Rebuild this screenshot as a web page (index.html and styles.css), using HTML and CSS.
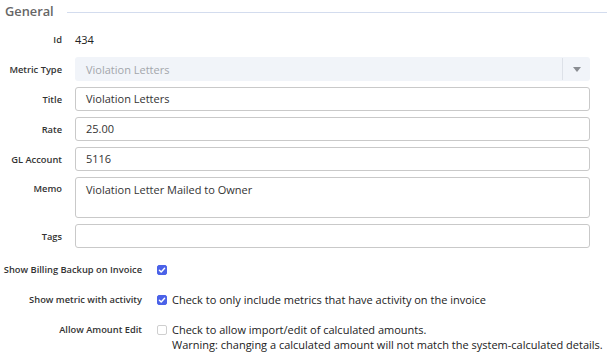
FILE: index.html
```html
<!DOCTYPE html>
<html>
<head>
<meta charset="utf-8">
<link rel="stylesheet" href="styles.css">
</head>
<body>
<div class="page">
  <div class="section-head">
    <span class="section-title">General</span>
    <span class="section-line"></span>
  </div>
  <div class="fields">
    <div class="row">
      <label class="lbl">Id</label>
      <div class="val">434</div>
    </div>
    <div class="row">
      <label class="lbl">Metric Type</label>
      <div class="select">
        <span class="select-text">Violation Letters</span>
        <span class="select-btn"><span class="caret"></span></span>
      </div>
    </div>
    <div class="row">
      <label class="lbl">Title</label>
      <div class="input">Violation Letters</div>
    </div>
    <div class="row">
      <label class="lbl">Rate</label>
      <div class="input">25.00</div>
    </div>
    <div class="row">
      <label class="lbl">GL Account</label>
      <div class="input">5116</div>
    </div>
    <div class="row row-top">
      <label class="lbl lbl-top">Memo</label>
      <div class="input textarea">Violation Letter Mailed to Owner</div>
    </div>
    <div class="row">
      <label class="lbl">Tags</label>
      <div class="input"></div>
    </div>
  </div>
  <div class="checks">
    <div class="crow">
      <label class="clbl">Show Billing Backup on Invoice</label>
      <span class="cb checked"><svg viewBox="0 0 10 10" width="10" height="10"><path d="M2.4 5.2 L4.2 7 L7.6 3.2" fill="none" stroke="#fff" stroke-width="1.4" stroke-linecap="round" stroke-linejoin="round"/></svg></span>
      <div class="ctext"></div>
    </div>
    <div class="crow">
      <label class="clbl">Show metric with activity</label>
      <span class="cb checked"><svg viewBox="0 0 10 10" width="10" height="10"><path d="M2.4 5.2 L4.2 7 L7.6 3.2" fill="none" stroke="#fff" stroke-width="1.4" stroke-linecap="round" stroke-linejoin="round"/></svg></span>
      <div class="ctext">Check to only include metrics that have activity on the invoice</div>
    </div>
    <div class="crow">
      <label class="clbl">Allow Amount Edit</label>
      <span class="cb"></span>
      <div class="ctext">Check to allow import/edit of calculated amounts.<br>Warning: changing a calculated amount will not match the system-calculated details.</div>
    </div>
  </div>
</div>
</body>
</html>
```
FILE: styles.css
```css
* { box-sizing: border-box; }
html, body { margin: 0; padding: 0; background: #fff; }
body {
  font-family: "Open Sans", "Noto Sans", sans-serif;
  color: #333;
}
.page {
  width: 607px;
  padding: 0 17px 0 0;
}
.section-head {
  display: flex;
  align-items: center;
  height: 24px;
  padding-left: 5px;
}
.section-title {
  font-size: 12.8px;
  font-weight: 600;
  color: #666;
  line-height: 24px;
  margin-top: -2px;
}
.section-line {
  flex: 1;
  height: 1px;
  background: #d3dcee;
  margin-left: 13px;
  margin-right: -17px;
}
.fields {
  display: flex;
  flex-direction: column;
  gap: 6px;
  margin-top: 3px;
}
.row {
  display: grid;
  grid-template-columns: 62px 1fr;
  column-gap: 13px;
  align-items: center;
  min-height: 24px;
}
.row-top { align-items: start; }
.lbl {
  text-align: right;
  font-size: 9.3px;
  font-weight: 600;
  color: #333;
  white-space: nowrap;
}
.lbl-top { padding-top: 5px; }
.val {
  font-size: 11px;
  color: #222;
}
.input {
  height: 24px;
  border: 1px solid #c9c9c9;
  border-radius: 3px;
  padding: 0 10px;
  font-size: 11px;
  line-height: 22px;
  color: #333;
}
.textarea {
  height: 41px;
  padding-top: 1px;
}
.select {
  height: 24px;
  border-radius: 3px;
  background: #f1f4f9;
  display: flex;
  align-items: center;
}
.select-text {
  flex: 1;
  padding-left: 11px;
  font-size: 11px;
  color: #a3a6ab;
}
.select-btn {
  width: 28px;
  height: 22px;
  border-left: 1px solid #dde1e8;
  display: flex;
  align-items: center;
  justify-content: center;
}
.caret {
  width: 0;
  height: 0;
  border-left: 4px solid transparent;
  border-right: 4px solid transparent;
  border-top: 5px solid #8a8d92;
}
.checks {
  display: flex;
  flex-direction: column;
  gap: 15px;
  margin-top: 14px;
}
.crow {
  display: grid;
  grid-template-columns: 157px 10px 1fr;
  align-items: start;
  line-height: 15px;
}
.clbl {
  text-align: right;
  font-size: 9.3px;
  font-weight: 600;
  color: #333;
  white-space: nowrap;
  margin-right: 15px;
}
.cb {
  width: 10px;
  height: 10px;
  margin-top: 3px;
  border-radius: 2px;
  border: 1px solid #cfcfcf;
  background: #fff;
  display: flex;
}
.cb.checked {
  background: #4b62e8;
  border-color: #4b62e8;
}
.cb svg { margin: -1px; }
.ctext {
  padding-left: 5px;
  font-size: 11px;
  color: #222;
  white-space: nowrap;
}
```
